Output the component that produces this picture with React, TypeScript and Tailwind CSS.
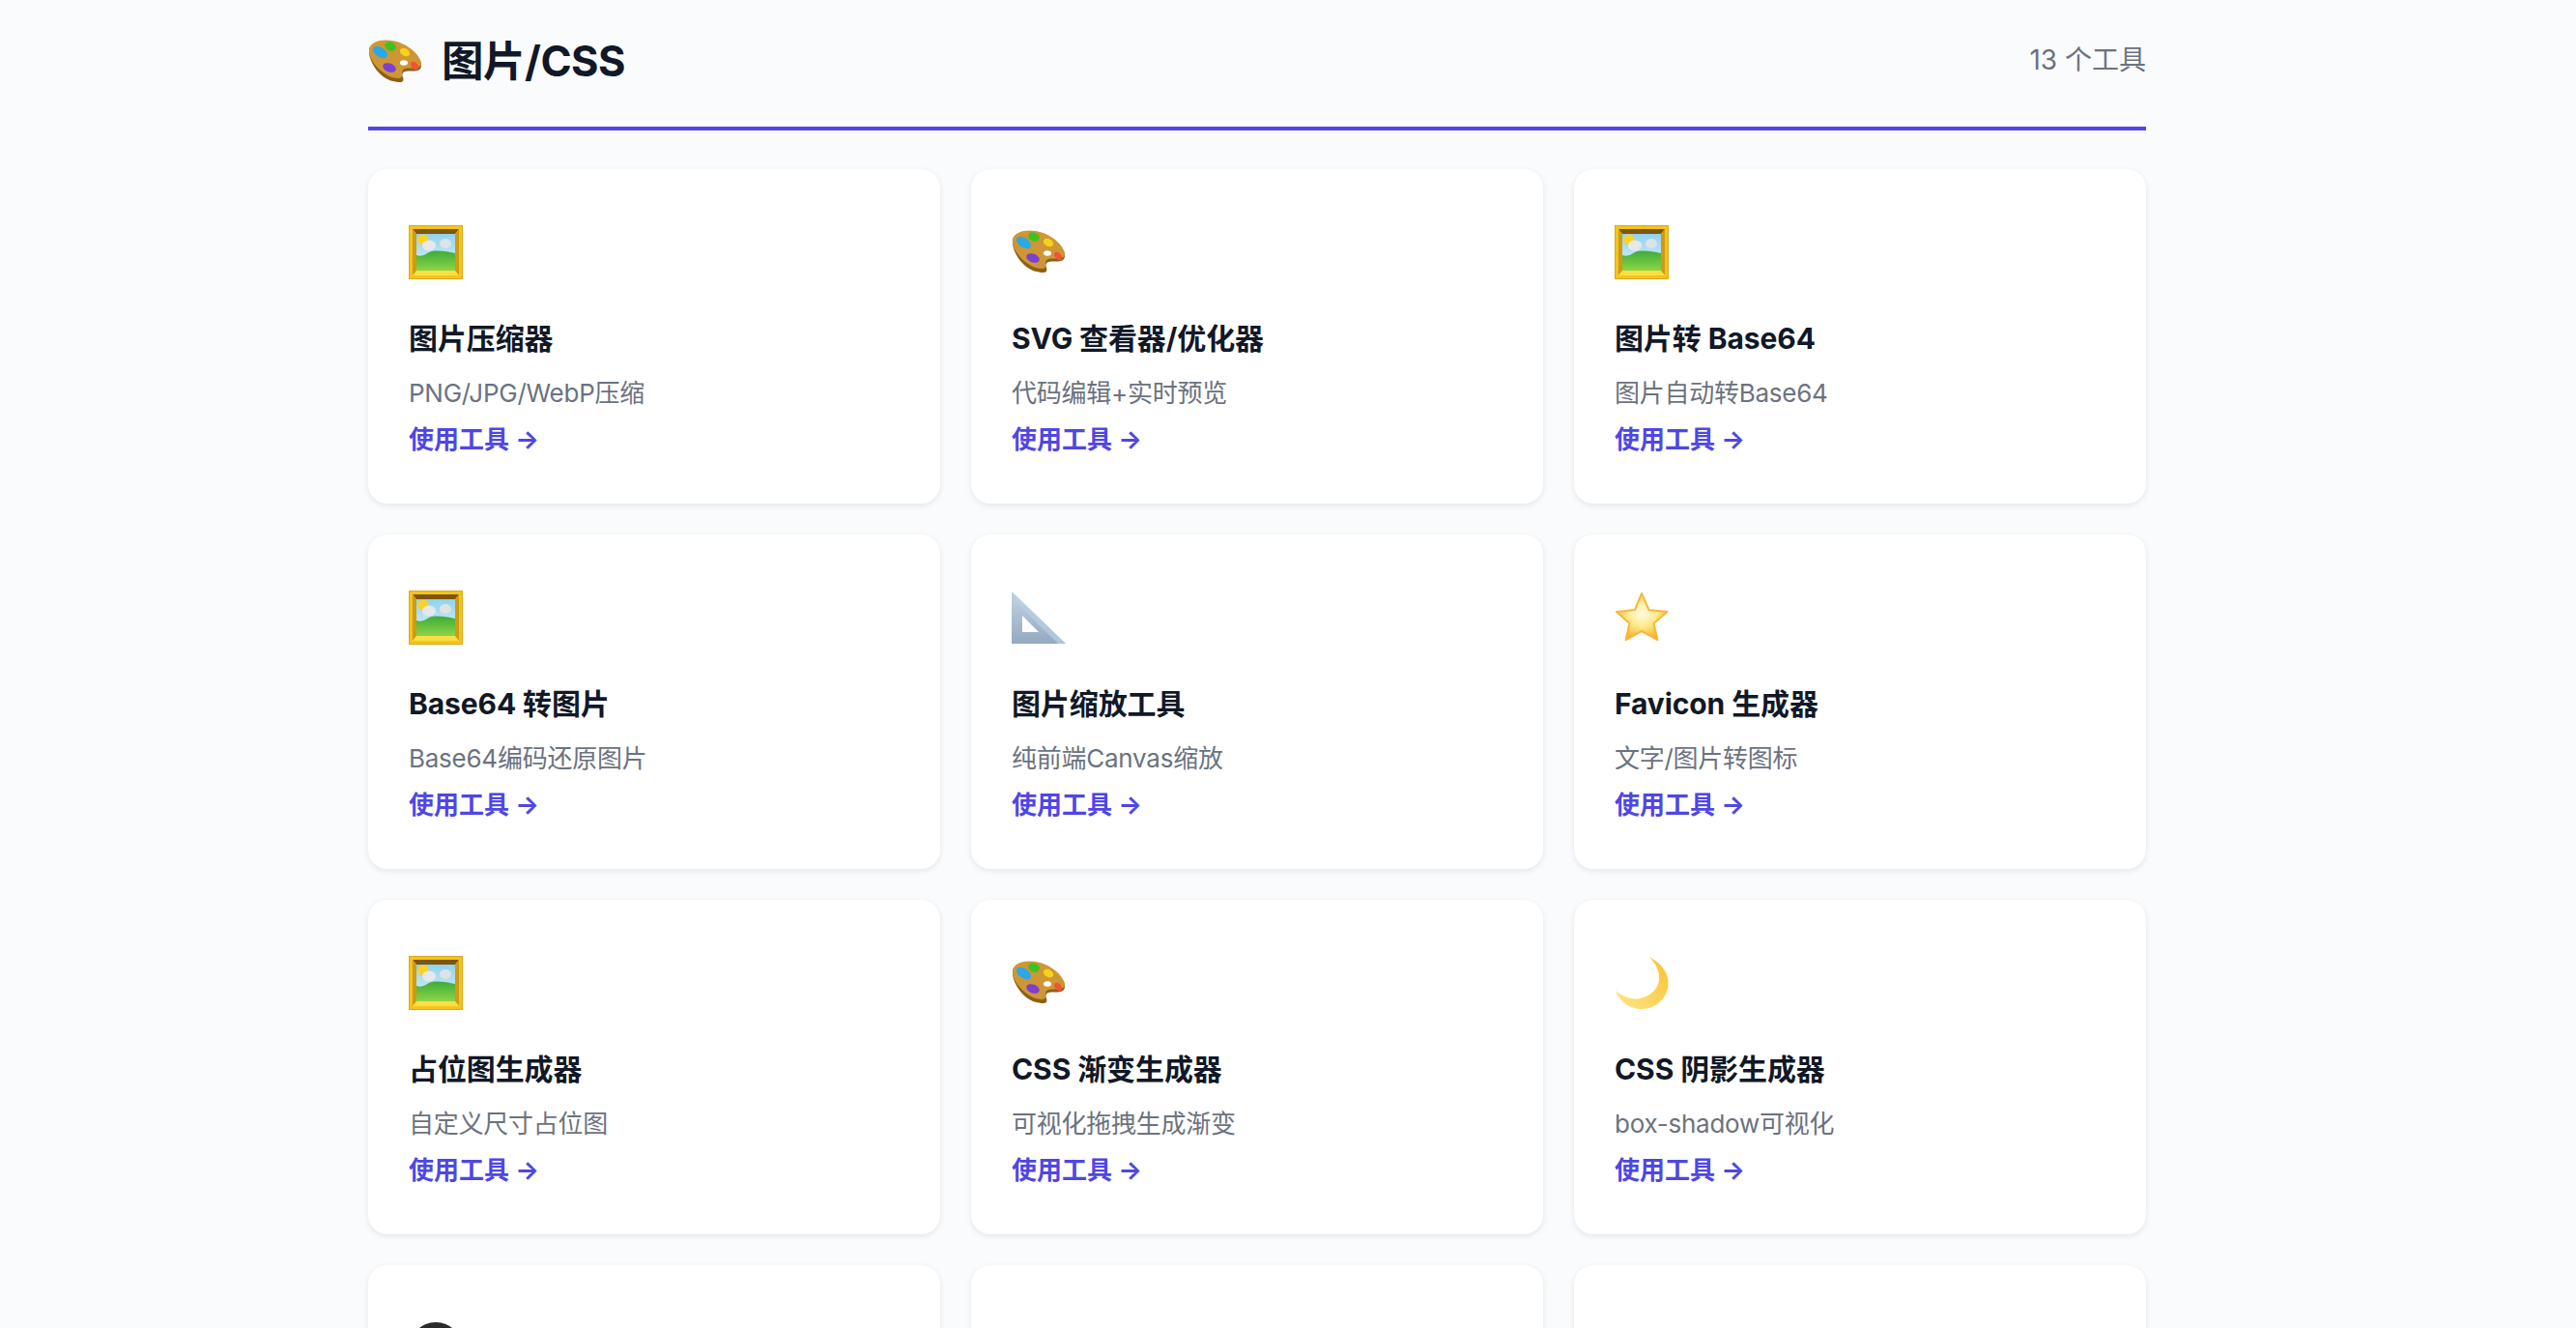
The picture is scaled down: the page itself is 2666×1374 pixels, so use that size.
const Frame = () => (
  <svg viewBox="0 0 56 56" className="w-[56px] h-[56px]">
    <defs>
      <linearGradient id="sky" x1="0" y1="0" x2="0" y2="1">
        <stop offset="0" stopColor="#8fd3ef" />
        <stop offset="1" stopColor="#dff2f7" />
      </linearGradient>
      <linearGradient id="hill" x1="0" y1="0" x2="0" y2="1">
        <stop offset="0" stopColor="#3dab3a" />
        <stop offset="1" stopColor="#8ed544" />
      </linearGradient>
    </defs>
    <rect x="0.5" y="0.5" width="55" height="55" fill="#f3c41c" stroke="#dca91e" strokeWidth="1" />
    <path d="M4 4h48l-4 5H8z" fill="#7d560c" />
    <path d="M4 4l4 5v38l-4 5z" fill="#cf9a14" />
    <path d="M52 4l-4 5v38l4 5z" fill="#cf9a14" />
    <path d="M4 52l4-5h40l4 5z" fill="#fbdf45" />
    <rect x="8" y="9" width="40" height="38" fill="url(#sky)" />
    <circle cx="15" cy="15" r="5.5" fill="#ffd21f" />
    <ellipse cx="21" cy="21" rx="7" ry="5.5" fill="#e6e8ec" />
    <ellipse cx="38" cy="19" rx="6" ry="5" fill="#dfe3e8" />
    <path d="M8 31c6 2 9-1 13-3 6-3 18-1 27 1v18H8z" fill="url(#hill)" />
  </svg>
);

const Palette = () => (
  <svg viewBox="0 0 56 56" className="w-[56px] h-[56px]">
    <path d="M1 15C3 8 14 5 25 7c13 2 25 11 29 20 2 5 1 9-3 10-4 1-9 0-13 1-3 1-3 4-2 6 1 3 0 5-3 5-6 0-13-2-19-7C7 36 0 25 1 15z" fill="#8d5f16" />
    <path d="M1 14C3 7 14 4 25 6c13 2 25 11 29 20 2 4 1 7-3 8-4 1-9 0-13 1-3 1-3 4-3 6 0 3-1 4-4 4-6 0-12-3-18-8C7 32 0 23 1 14z" fill="#cf9635" />
    <ellipse cx="12.5" cy="18" rx="8.5" ry="5" transform="rotate(35 12.5 18)" fill="#2aa8e8" />
    <ellipse cx="23" cy="12" rx="6" ry="4.5" transform="rotate(20 23 12)" fill="#3cc31e" />
    <ellipse cx="38" cy="18" rx="5.5" ry="3.8" transform="rotate(30 38 18)" fill="#f6d318" />
    <ellipse cx="48" cy="32" rx="5" ry="3.2" transform="rotate(50 48 32)" fill="#f0533a" />
    <ellipse cx="22" cy="34" rx="7" ry="4.5" transform="rotate(20 22 34)" fill="#7b3fd2" />
    <ellipse cx="37" cy="29" rx="4" ry="2.8" fill="#ffffff" />
  </svg>
);

const Ruler = () => (
  <svg viewBox="0 0 56 56" className="w-[56px] h-[56px]">
    <defs>
      <linearGradient id="rl" x1="0" y1="0" x2="0" y2="1">
        <stop offset="0" stopColor="#c3d4e2" />
        <stop offset="1" stopColor="#95a9bf" />
      </linearGradient>
    </defs>
    <path d="M0 1l56 54H0z" fill="url(#rl)" />
    <path d="M0 1l56 54h-8L3 11z" fill="#b9d0e2" opacity="0.7" />
    <path d="M11 26l17 17H11z" fill="#ffffff" />
  </svg>
);

const Star = () => (
  <svg viewBox="0 0 56 56" className="w-[56px] h-[56px]">
    <defs>
      <radialGradient id="st" cx="0.5" cy="0.42" r="0.6">
        <stop offset="0" stopColor="#fffbe0" />
        <stop offset="0.5" stopColor="#fee98a" />
        <stop offset="1" stopColor="#f9ab1f" />
      </radialGradient>
    </defs>
    <path d="M28 3l7.500 17 19 2-14 12 4 17-16.500-9-16.500 9 4-17L2 22l19-2z" fill="url(#st)" stroke="#f7b83a" strokeWidth="2" strokeLinejoin="round" />
  </svg>
);

const Moon = () => (
  <svg viewBox="0 0 56 56" className="w-[56px] h-[56px]">
    <defs>
      <linearGradient id="mn" x1="0" y1="1" x2="1" y2="0">
        <stop offset="0" stopColor="#fde68a" />
        <stop offset="1" stopColor="#fbc02d" />
      </linearGradient>
    </defs>
    <path d="M35.5 1C48 7 55.500 17 55.500 28 55.500 43 43 55 28 55 15 55 5 47 1 36 8 42 18 46 26 44 38 42 47 32 46 22 46 14 42 7 35.500 1z" fill="url(#mn)" />
  </svg>
);

const Dot = () => (
  <svg viewBox="0 0 56 56" className="w-[56px] h-[56px]">
    <circle cx="28" cy="28" r="27" fill="#2b2b2b" />
  </svg>
);

const tools = [
  { icon: <Frame />, name: "图片压缩器", desc: "PNG/JPG/WebP压缩" },
  { icon: <Palette />, name: "SVG 查看器/优化器", desc: "代码编辑+实时预览" },
  { icon: <Frame />, name: "图片转 Base64", desc: "图片自动转Base64" },
  { icon: <Frame />, name: "Base64 转图片", desc: "Base64编码还原图片" },
  { icon: <Ruler />, name: "图片缩放工具", desc: "纯前端Canvas缩放" },
  { icon: <Star />, name: "Favicon 生成器", desc: "文字/图片转图标" },
  { icon: <Frame />, name: "占位图生成器", desc: "自定义尺寸占位图" },
  { icon: <Palette />, name: "CSS 渐变生成器", desc: "可视化拖拽生成渐变" },
  { icon: <Moon />, name: "CSS 阴影生成器", desc: "box-shadow可视化" },
];

const App: React.FC = () => {
  return (
    <div className="h-screen overflow-hidden bg-[#fafbfd] font-['Inter','Noto_Sans_CJK_SC',sans-serif]">
      <div className="ml-[381px] w-[1840px]">
        <header className="flex items-center justify-between h-[135px] border-b-[4px] border-[#4f46e5] pb-[4px]">
          <h2 className="flex items-center gap-[20px] text-[43.5px] font-bold tracking-[-0.5px] text-[#111827]">
            <Palette />
            图片/CSS
          </h2>
          <span className="pb-[4px] text-[28px] text-[#6b7280]">13 个工具</span>
        </header>

        <div className="grid grid-cols-3 gap-[32px] mt-[40px]">
          {tools.map((t) => (
            <div key={t.name} className="h-[346px] rounded-[20px] bg-white px-[42px] pt-[58px] shadow-[0_2px_6px_rgba(0,0,0,0.09)]">
              {t.icon}
              <h3 className="mt-[41px] text-[30px] leading-[40px] font-bold tracking-[-0.1px] text-[#111827]">{t.name}</h3>
              <p className="mt-[17px] text-[26px] leading-[40px] tracking-[-0.25px] text-[#6b7280]">{t.desc}</p>
              <span className="block mt-[8px] text-[26px] leading-[40px] font-bold text-[#4f46e5]">使用工具 →</span>
            </div>
          ))}
          <div className="h-[346px] rounded-[20px] bg-white px-[42px] pt-[58px] shadow-[0_2px_6px_rgba(0,0,0,0.09)]">
            <Dot />
          </div>
          <div className="h-[346px] rounded-[20px] bg-white shadow-[0_2px_6px_rgba(0,0,0,0.09)]" />
          <div className="h-[346px] rounded-[20px] bg-white shadow-[0_2px_6px_rgba(0,0,0,0.09)]" />
        </div>
      </div>
    </div>
  );
};

export default App;
